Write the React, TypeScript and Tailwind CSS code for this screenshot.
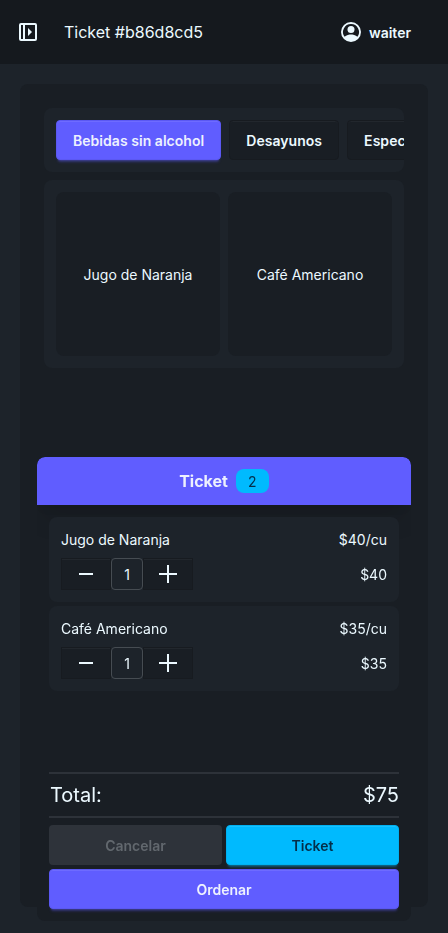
import { useState } from 'react';

const categories = ['Bebidas sin alcohol', 'Desayunos', 'Especialidades'];
const products = ['Jugo de Naranja', 'Café Americano'];

interface Item {
  name: string;
  price: number;
  quantity: number;
}

function PanelIcon() {
  return (
    <svg className="size-6" viewBox="0 0 24 24" fill="none">
      <rect x="4" y="4" width="16" height="16" rx="1" stroke="currentColor" strokeWidth="2" />
      <path d="M8 4v16" stroke="currentColor" strokeWidth="2" />
      <path d="M12 8v8l4-4z" fill="currentColor" />
    </svg>
  );
}

function AccountIcon() {
  return (
    <svg className="size-6" viewBox="0 0 24 24" fill="currentColor">
      <path
        fillRule="evenodd"
        d="M12 2a10 10 0 1 0 0 20a10 10 0 0 0 0-20zM12 4a8 8 0 0 1 6.36 12.83C16.93 15.09 13.46 14.5 12 14.5s-4.93.59-6.36 2.33A8 8 0 0 1 12 4z"
      />
      <circle cx="12" cy="9.5" r="3.5" />
    </svg>
  );
}

const stepButton =
  'flex h-8 w-[50px] cursor-pointer items-center justify-center border border-[#171b20] bg-[#191e24] shadow-[inset_0_1px_0_#22272d]';

function TicketItem({ item, onChange }: { item: Item; onChange: (quantity: number) => void }) {
  return (
    <li className="flex h-[85px] flex-col rounded-lg bg-[#1d232a] px-3 pt-3 text-sm">
      <div className="flex justify-between leading-[21px]">
        <span>{item.name}</span>
        <span>${item.price}/cu</span>
      </div>
      <div className="mt-2 flex h-8 items-center justify-between">
        <div className="flex">
          <button className={stepButton} onClick={() => onChange(item.quantity - 1)}>
            <span className="h-0.5 w-3.5 bg-current" />
          </button>
          <span className="flex size-8 items-center justify-center rounded-sm border border-[#464c52] pt-0.5">
            {item.quantity}
          </span>
          <button className={stepButton} onClick={() => onChange(item.quantity + 1)}>
            <svg className="size-[18px]" viewBox="0 0 18 18" stroke="currentColor" strokeWidth="2">
              <path d="M0 9h18M9 0v18" />
            </svg>
          </button>
        </div>
        <span className="pt-0.5">${item.price * item.quantity}</span>
      </div>
    </li>
  );
}

export default function App() {
  const [category, setCategory] = useState(categories[0]);
  const [items, setItems] = useState<Item[]>([
    { name: 'Jugo de Naranja', price: 40, quantity: 1 },
    { name: 'Café Americano', price: 35, quantity: 1 },
  ]);

  const total = items.reduce((sum, item) => sum + item.price * item.quantity, 0);

  const updateQuantity = (name: string, quantity: number) => {
    setItems(items.map((item) => (item.name === name ? { ...item, quantity: Math.max(1, quantity) } : item)));
  };

  return (
    <div className="flex h-screen flex-col overflow-hidden bg-[#1d232a] font-['Inter',sans-serif] text-[#ecf9ff]">
      <header className="flex h-16 shrink-0 items-center bg-[#15191e] px-4">
        <PanelIcon />
        <h1 className="ml-6 flex-1">Ticket #b86d8cd5</h1>
        <div className="mr-[21px] flex items-center gap-1.5 text-sm font-semibold">
          <AccountIcon />
          <span className="pt-0.5">waiter</span>
        </div>
      </header>

      <main className="mx-5 mt-5 flex h-[823px] shrink-0 flex-col gap-2 rounded-lg bg-[#191e24] p-6">
        <nav className="flex h-16 shrink-0 gap-2 overflow-hidden rounded-lg bg-[#1d232a] p-3 tracking-[0.04px]">
          {categories.map((name) => (
            <button
              key={name}
              onClick={() => setCategory(name)}
              className={
                name === category
                  ? 'h-10 shrink-0 cursor-pointer rounded-sm border border-[#5b58f2] bg-[#605dff] px-4 pt-0.5 text-sm font-semibold text-[#edf1fe] shadow-[inset_0_1px_0_#6e6bff,0_3px_2px_-2px_#605dff4d,0_4px_3px_-2px_#605dff4d]'
                  : 'h-10 shrink-0 cursor-pointer rounded-sm border border-[#171b20] bg-[#191e24] px-4 pt-0.5 text-sm font-semibold shadow-[inset_0_1px_0_#22272d]'
              }
            >
              {name}
            </button>
          ))}
        </nav>
        <section className="grid grid-cols-2 gap-2 rounded-lg bg-[#1d232a] p-3">
          {products.map((name) => (
            <button
              key={name}
              className="flex h-[164px] w-[164px] cursor-pointer items-center justify-center rounded-lg bg-[#191e24] pt-0.5 text-sm"
            >
              {name}
            </button>
          ))}
        </section>
      </main>

      <aside className="fixed bottom-3 left-[37px] flex h-[464px] w-[374px] flex-col overflow-hidden rounded-lg bg-[#191e24]">
        <div className="flex h-12 shrink-0 items-center justify-center gap-2 rounded-t-lg bg-[#605dff] font-bold text-[#edf1fe] shadow-xl">
          Ticket
          <span className="flex h-6 w-[33px] items-center justify-center rounded-lg bg-[#00bafe] pt-0.5 text-sm font-normal text-[#042e49]">
            {items.length}
          </span>
        </div>
        <div className="flex flex-1 flex-col p-3">
          <ul className="relative flex flex-1 flex-col gap-1">
            {items.map((item) => (
              <TicketItem key={item.name} item={item} onChange={(quantity) => updateQuantity(item.name, quantity)} />
            ))}
          </ul>
          <div className="mb-[7px] flex h-[46px] items-center justify-between border-y-2 border-[#2d3239] pl-px text-xl">
            <span>Total:</span>
            <span>${total}</span>
          </div>
          <div className="grid grid-cols-2 gap-1 text-sm font-semibold">
            <button disabled className="h-10 rounded-sm bg-[#2e333a] pt-0.5 text-[#62686e]">
              Cancelar
            </button>
            <button className="h-10 cursor-pointer rounded-sm border border-[#00b1f1] bg-[#00bafe] pt-0.5 text-[#042e49] shadow-[inset_0_1px_0_#19c1fe,0_3px_2px_-2px_#00bafe4d,0_4px_3px_-2px_#00bafe4d]">
              Ticket
            </button>
            <button className="col-span-2 h-10 cursor-pointer rounded-sm border border-[#5b58f2] bg-[#605dff] pt-0.5 text-[#edf1fe] shadow-[inset_0_1px_0_#6e6bff,0_3px_2px_-2px_#605dff4d,0_4px_3px_-2px_#605dff4d]">
              Ordenar
            </button>
          </div>
        </div>
      </aside>
    </div>
  );
}
